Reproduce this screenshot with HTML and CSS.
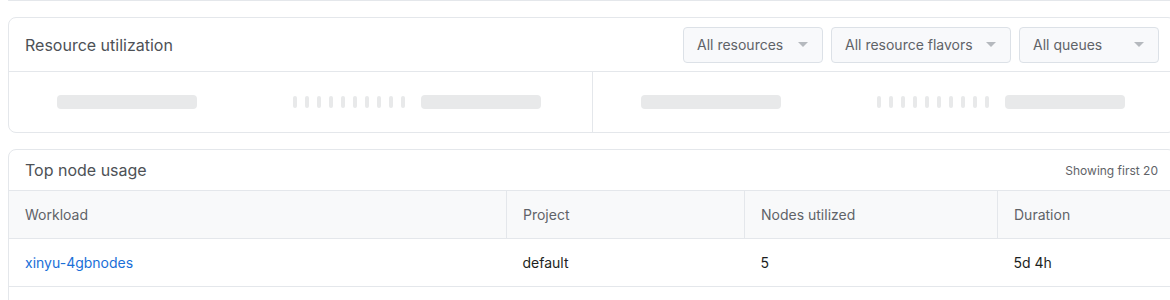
FILE: index.html
```html
<!DOCTYPE html>
<html>

<head>
	<meta name="viewport" content="width=device-width, initial-scale=1" />
	<link rel="stylesheet" href="styles.css">
</head>

<body>
	<div class="page">
		<div class="card prevCard"></div>

		<div class="card">
			<div class="cardHeader">
				<div class="cardTitle">Resource utilization</div>
				<div class="filters">
					<div class="select selectSmall"><span>All resources</span><span class="caret"></span></div>
					<div class="select selectWide"><span>All resource flavors</span><span class="caret"></span></div>
					<div class="select selectSmall"><span>All queues</span><span class="caret"></span></div>
				</div>
			</div>
			<div class="utilBody">
				<div class="utilHalf">
					<div class="skel skelLong"></div>
					<div class="ticks">
						<i></i><i></i><i></i><i></i><i></i><i></i><i></i><i></i><i></i><i></i>
					</div>
					<div class="skel skelShort"></div>
				</div>
				<div class="utilHalf">
					<div class="skel skelLong"></div>
					<div class="ticks">
						<i></i><i></i><i></i><i></i><i></i><i></i><i></i><i></i><i></i><i></i>
					</div>
					<div class="skel skelShort"></div>
				</div>
			</div>
		</div>

		<div class="card">
			<div class="cardHeader tableHeader">
				<div class="cardTitle">Top node usage</div>
				<div class="note">Showing first 20</div>
			</div>
			<table class="usage">
				<thead>
					<tr>
						<th class="colWorkload">Workload</th>
						<th class="colProject">Project</th>
						<th class="colNodes">Nodes utilized</th>
						<th>Duration</th>
					</tr>
				</thead>
				<tbody>
					<tr>
						<td><a href="#">xinyu-4gbnodes</a></td>
						<td>default</td>
						<td>5</td>
						<td>5d 4h</td>
					</tr>
					<tr>
						<td class="empty" colspan="4"></td>
					</tr>
				</tbody>
			</table>
		</div>
	</div>
</body>

</html>
```

FILE: styles.css
```css
html,
body {
	margin: 0;
	overflow: hidden;
}

body {
	background-color: #ffffff;
	font-family: Inter, "Noto Sans", sans-serif;
	color: #1d1f21;
}

.page {
	padding-left: 8px;
	width: 1168px;
}

.card {
	border: 1px solid #e4e7eb;
	border-radius: 8px;
	background-color: #ffffff;
	margin-bottom: 16px;
	overflow: hidden;
}

.prevCard {
	border-top: none;
	border-radius: 0 0 8px 8px;
	height: 0;
}

.cardHeader {
	display: flex;
	align-items: center;
	justify-content: space-between;
	height: 53px;
	padding: 0 16px;
	border-bottom: 1px solid #e4e7eb;
}

.cardTitle {
	font-size: 16px;
	color: #4d5156;
}

.filters {
	display: flex;
	gap: 8px;
}

.select {
	display: flex;
	align-items: center;
	justify-content: space-between;
	box-sizing: border-box;
	height: 36px;
	padding: 0 14px 0 13px;
	background-color: #f8f9fb;
	border: 1px solid #dce1e7;
	border-radius: 4px;
	font-size: 14px;
	color: #5f6368;
}

.selectSmall {
	width: 140px;
}

.selectWide {
	width: 180px;
}

.caret {
	width: 0;
	height: 0;
	border-left: 5px solid transparent;
	border-right: 5px solid transparent;
	border-top: 5px solid #b5b9be;
}

.utilBody {
	display: flex;
	height: 60px;
}

.utilHalf {
	flex: 1;
	display: flex;
	align-items: center;
	padding-left: 48px;
}

.utilHalf + .utilHalf {
	border-left: 1px solid #e4e7eb;
}

.skel {
	height: 14px;
	border-radius: 4px;
	background-color: #e8e9ea;
}

.skelLong {
	width: 140px;
	margin-right: 96px;
}

.skelShort {
	width: 120px;
	margin-left: 16px;
}

.ticks {
	display: flex;
	gap: 8px;
}

.ticks i {
	display: block;
	width: 4px;
	height: 12px;
	border-radius: 2px;
	background-color: #e8e9ea;
}

.tableHeader {
	height: 40px;
	border-bottom: none;
	padding-right: 17px;
}

.note {
	font-size: 12px;
	color: #5f6368;
}

.usage {
	width: 100%;
	border-collapse: collapse;
	font-size: 14px;
}

.usage th {
	height: 47px;
	padding: 0 16px;
	text-align: left;
	font-weight: normal;
	color: #5f6368;
	background-color: #f8f9fa;
	border-top: 1px solid #e4e7eb;
	border-bottom: 1px solid #e4e7eb;
}

.usage th + th {
	border-left: 1px solid #e4e7eb;
}

.usage td {
	height: 47px;
	padding: 0 16px;
	border-bottom: 1px solid #e4e7eb;
	color: #1d1f21;
}

.usage td.empty {
	border-bottom: none;
}

.colWorkload {
	width: 465px;
}

.colProject {
	width: 205px;
}

.colNodes {
	width: 220px;
}

.usage a {
	color: #1a6fd8;
	text-decoration: none;
}
```
